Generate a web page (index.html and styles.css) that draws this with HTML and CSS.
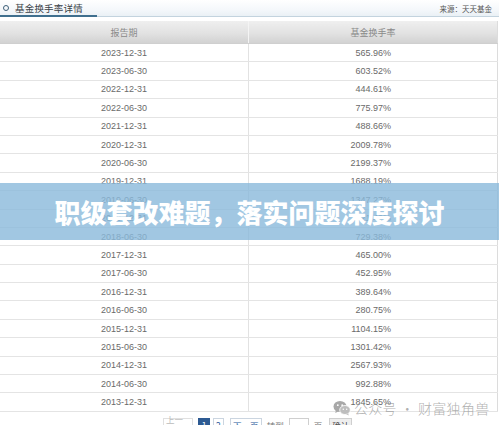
FILE: index.html
```html
<!DOCTYPE html>
<html lang="zh-CN">
<head>
<meta charset="utf-8">
<title>基金换手率详情</title>
<link rel="stylesheet" href="styles.css">
</head>
<body>
<div class="page">
  <div class="titlebar">
    <div class="title">
      <span class="ring"></span>
      <span class="title-text">基金换手率详情</span>
    </div>
    <div class="title-rest">
      <span class="source">来源：天天基金</span>
    </div>
  </div>

  <table class="grid">
    <thead>
      <tr><th>报告期</th><th>基金换手率</th></tr>
    </thead>
    <tbody>
      <tr><td>2023-12-31</td><td class="num">565.96%</td></tr>
      <tr><td>2023-06-30</td><td class="num">603.52%</td></tr>
      <tr><td>2022-12-31</td><td class="num">444.61%</td></tr>
      <tr><td>2022-06-30</td><td class="num">775.97%</td></tr>
      <tr><td>2021-12-31</td><td class="num">488.66%</td></tr>
      <tr><td>2020-12-31</td><td class="num">2009.78%</td></tr>
      <tr><td>2020-06-30</td><td class="num">2199.37%</td></tr>
      <tr><td>2019-12-31</td><td class="num">1688.19%</td></tr>
      <tr><td>2019-06-30</td><td class="num">1347.27%</td></tr>
      <tr><td>2018-12-31</td><td class="num">1121.42%</td></tr>
      <tr><td>2018-06-30</td><td class="num">729.38%</td></tr>
      <tr><td>2017-12-31</td><td class="num">465.00%</td></tr>
      <tr><td>2017-06-30</td><td class="num">452.95%</td></tr>
      <tr><td>2016-12-31</td><td class="num">389.64%</td></tr>
      <tr><td>2016-06-30</td><td class="num">280.75%</td></tr>
      <tr><td>2015-12-31</td><td class="num">1104.15%</td></tr>
      <tr><td>2015-06-30</td><td class="num">1301.42%</td></tr>
      <tr><td>2014-12-31</td><td class="num">2567.93%</td></tr>
      <tr><td>2014-06-30</td><td class="num">992.88%</td></tr>
      <tr><td>2013-12-31</td><td class="num">1845.65%</td></tr>
    </tbody>
  </table>

  <div class="pager">
    <span class="pg disabled">上一页</span>
    <span class="pg current">1</span>
    <span class="pg">2</span>
    <span class="pg link">下一页</span>
    <span class="pg-label">转到</span>
    <span class="pg-input"></span>
    <span class="pg-label">页</span>
    <span class="pg btn">确认</span>
  </div>

  <div class="banner">职级套改难题，落实问题深度探讨</div>

  <div class="watermark">
    <svg class="wm-icon" width="18" height="16" viewBox="0 0 18 16">
      <ellipse cx="7" cy="6.5" rx="6.5" ry="5.5" fill="#a8a8a8"/>
      <path d="M3 10.5 L2.2 13 L5.4 11.6 Z" fill="#a8a8a8"/>
      <circle cx="4.8" cy="5.2" r="0.9" fill="#fff"/>
      <circle cx="9.2" cy="5.2" r="0.9" fill="#fff"/>
      <ellipse cx="12" cy="10" rx="5.3" ry="4.5" fill="#bdbdbd" stroke="#fff" stroke-width="0.8"/>
      <path d="M15 13.5 L16 15.6 L13.2 14.3 Z" fill="#bdbdbd"/>
      <circle cx="10.3" cy="9.2" r="0.7" fill="#fff"/>
      <circle cx="13.7" cy="9.2" r="0.7" fill="#fff"/>
    </svg>
    <span class="wm-text">公众号 · 财富独角兽</span>
  </div>
</div>
</body>
</html>
```

FILE: styles.css
```css
html, body {
  margin: 0;
  padding: 0;
  background: #ffffff;
}

.page {
  position: relative;
  width: 499px;
  height: 425px;
  overflow: hidden;
  font-family: "Liberation Sans", Arial, "Noto Sans CJK SC", sans-serif;
}

.titlebar {
  display: flex;
  align-items: flex-end;
  height: 17px;
  background: linear-gradient(to bottom, #ffffff 0%, #f5f8fb 55%, #e8eff4 100%);
}

.title {
  display: flex;
  align-items: center;
  gap: 6px;
  width: 94px;
  height: 15px;
  padding-left: 3px;
  border-bottom: 2px solid #3f6f8e;
}

.ring {
  width: 4px;
  height: 4px;
  border: 1.5px solid #3d5f78;
  border-radius: 50%;
}

.title-text {
  font-family: "Noto Sans CJK SC", sans-serif;
  font-size: 9.5px;
  color: #3a4248;
  letter-spacing: 0.2px;
}

.title-rest {
  flex: 1;
  display: flex;
  justify-content: flex-end;
  align-items: center;
  height: 16px;
  border-bottom: 1px solid #c3d3de;
  padding-right: 7px;
}

.source {
  font-family: "Noto Sans CJK SC", sans-serif;
  font-size: 7.5px;
  color: #555;
}

.grid {
  margin-top: 4px;
  width: 498px;
  border-collapse: collapse;
  table-layout: fixed;
  border-right: 1px solid #dcdcdc;
}

.grid th {
  height: 22px;
  padding: 0;
  font-family: "Noto Sans CJK SC", sans-serif;
  font-weight: normal;
  font-size: 9px;
  color: #8a8a8a;
  background: linear-gradient(to bottom, #efefef 0%, #e2e2e2 55%, #d2d2d2 100%);
  border-bottom: 1px solid #cfcfcf;
}

.grid th:first-child,
.grid td:first-child {
  width: 248px;
  border-right: 1px solid #e2e2e2;
}

.grid th:first-child {
  border-right: 1px solid #f4f4f4;
}

.grid tr {
  height: 18.4px;
}

.grid td {
  padding: 0;
  font-size: 9px;
  color: #6a6a6a;
  text-align: center;
  border-bottom: 1px solid #e4e4e4;
}

.grid td.num {
  text-align: right;
  padding-right: 106px;
}

.pager {
  display: flex;
  align-items: center;
  gap: 3px;
  margin-top: 6px;
  padding-left: 163px;
  font-family: "Noto Sans CJK SC", sans-serif;
  font-size: 8.5px;
  color: #555;
}

.pg {
  display: flex;
  align-items: center;
  justify-content: center;
  height: 12px;
  padding: 0 2px;
  border: 1px solid #cbd5e0;
  background: #fff;
  color: #2a5a9a;
}

.pg.disabled {
  width: 24px;
  color: #bbb;
  border-color: #e0e0e0;
}

.pg.current {
  width: 6px;
  background: #2d5a92;
  border-color: #2d5a92;
  color: #fff;
  margin-left: 2px;
}

.pg.link {
  width: 26px;
  margin-left: 3px;
}

.pg-label {
  color: #777;
  margin-left: 2px;
}

.pg-input {
  width: 18px;
  height: 12px;
  border: 1px solid #cfcfcf;
  margin-left: 2px;
}

.pg.btn {
  background: #eeeeee;
  border-color: #cfcfcf;
  color: #333;
  margin-left: 4px;
}

.banner {
  position: absolute;
  left: 0;
  top: 183px;
  width: 100%;
  height: 57px;
  display: flex;
  align-items: center;
  justify-content: center;
  background: rgba(138, 185, 219, 0.8);
  font-family: "Noto Sans CJK SC", sans-serif;
  font-weight: 900;
  font-size: 26px;
  color: #ffffff;
  letter-spacing: 0;
}

.watermark {
  position: absolute;
  left: 333px;
  top: 398px;
  display: flex;
  align-items: center;
  gap: 3px;
}

.wm-text {
  font-family: "Noto Sans CJK SC", sans-serif;
  font-weight: 300;
  font-size: 14px;
  color: rgba(140, 140, 140, 0.7);
  letter-spacing: 0.3px;
}
```
